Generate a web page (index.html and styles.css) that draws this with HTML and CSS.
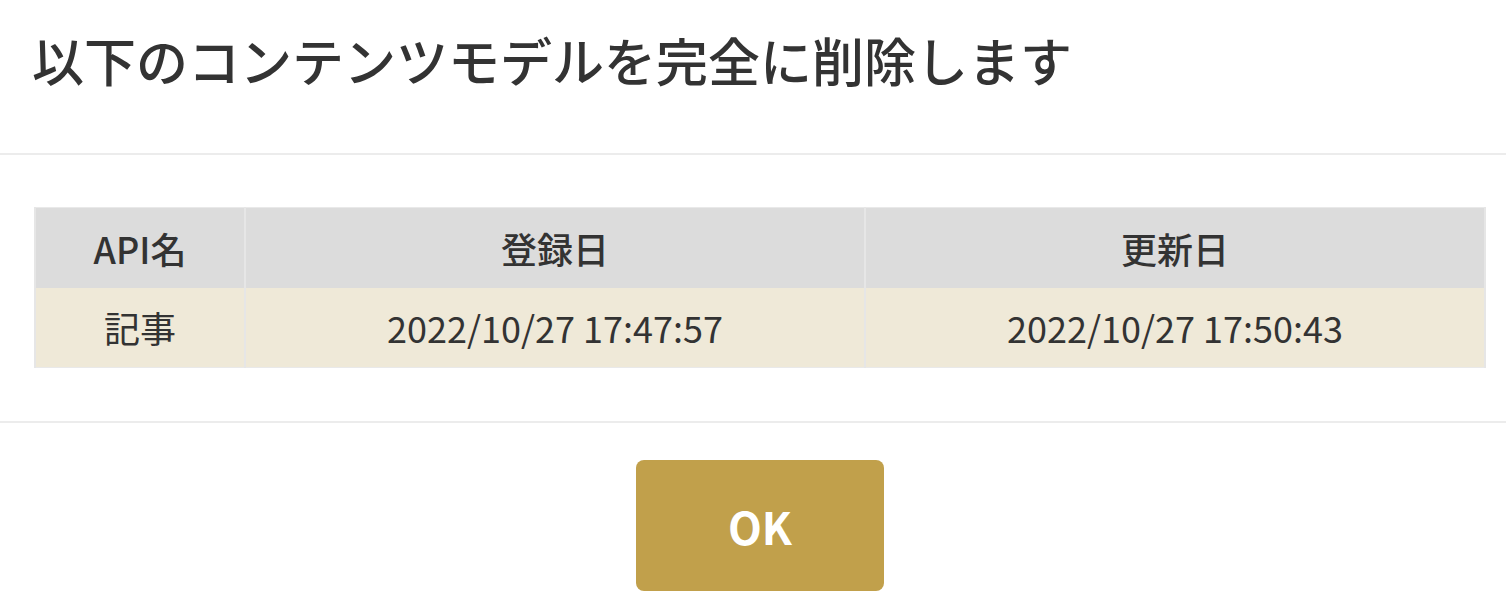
FILE: index.html
```html
<!DOCTYPE html>
<html lang="ja">
<head>
    <meta charset="UTF-8">
    <title>コンテンツモデルの削除</title>
    <link rel="stylesheet" href="styles.css">
</head>
<body>
    <div class="modal">
        <div class="modal-header">
            <h1 class="modal-title">以下のコンテンツモデルを完全に削除します</h1>
        </div>
        <div class="modal-body">
            <table class="model-table">
                <thead>
                    <tr>
                        <th class="col-name">API名</th>
                        <th>登録日</th>
                        <th>更新日</th>
                    </tr>
                </thead>
                <tbody>
                    <tr>
                        <td>記事</td>
                        <td>2022/10/27 17:47:57</td>
                        <td>2022/10/27 17:50:43</td>
                    </tr>
                </tbody>
            </table>
        </div>
        <div class="modal-footer">
            <button class="ok-button">OK</button>
        </div>
    </div>
</body>
</html>
```

FILE: styles.css
```css
body {
    margin: 0;
    background-color: #ffffff;
    color: #333333;
    font-family: "Noto Sans CJK JP", "Noto Sans", sans-serif;
}

.modal {
    width: 100%;
}

.modal-header {
    height: 155px;
    border-bottom: 2px solid #ececec;
    padding: 0 32px;
    display: flex;
    align-items: center;
    box-sizing: border-box;
}

.modal-title {
    margin: 0 0 34px 0;
    font-size: 52px;
    font-weight: 500;
    color: #333333;
    line-height: 1;
}

.modal-body {
    padding: 52px 20px 53px 34px;
    border-bottom: 2px solid #ececec;
}

.model-table {
    width: 100%;
    border-collapse: collapse;
    border: 1px solid #e9e9e9;
    font-size: 36px;
}

.model-table th,
.model-table td {
    height: 80px;
    padding: 0;
    text-align: center;
    border-left: 2px solid #e6e6e6;
    border-right: 2px solid #e6e6e6;
    box-sizing: border-box;
}

.model-table th {
    background-color: #dcdcdc;
    font-weight: 500;
}

.model-table td {
    background-color: #efe9d8;
    font-weight: 400;
}

.model-table .col-name {
    width: 210px;
}

.modal-footer {
    display: flex;
    justify-content: center;
    padding: 37px 0 0 14px;
}

.ok-button {
    width: 248px;
    height: 131px;
    border: none;
    border-radius: 8px;
    background-color: #c1a04b;
    color: #ffffff;
    font-family: "Noto Sans CJK JP", "Noto Sans", sans-serif;
    font-size: 44px;
    font-weight: 700;
    cursor: pointer;
}
```
